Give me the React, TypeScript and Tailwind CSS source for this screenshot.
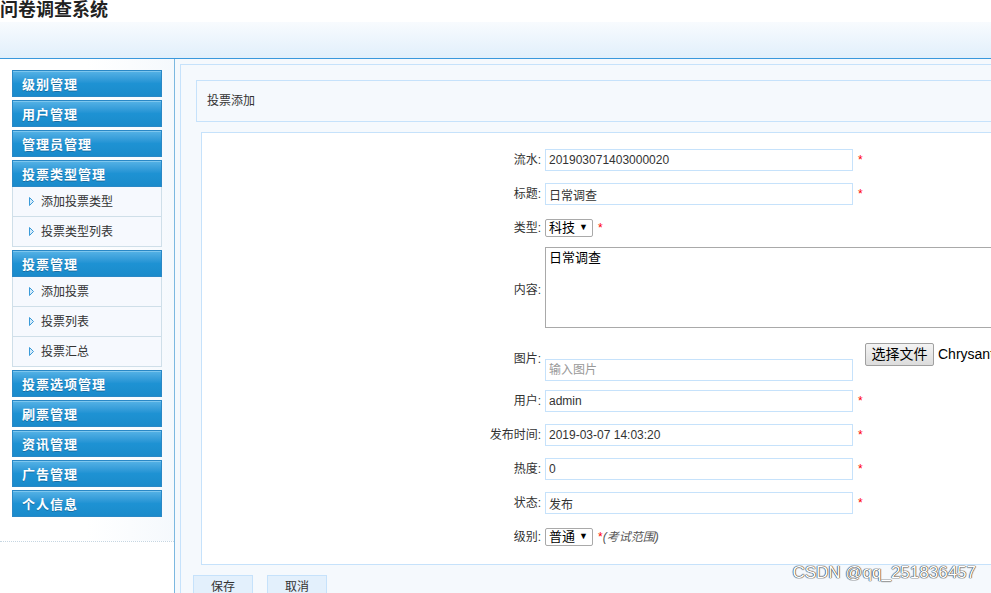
import React from 'react';

const font = "font-['Liberation_Sans','Noto_Sans_CJK_SC',sans-serif]";

type MenuItem = { title: string; subs?: string[] };

const menu: MenuItem[] = [
  { title: '级别管理' },
  { title: '用户管理' },
  { title: '管理员管理' },
  { title: '投票类型管理', subs: ['添加投票类型', '投票类型列表'] },
  { title: '投票管理', subs: ['添加投票', '投票列表', '投票汇总'] },
  { title: '投票选项管理' },
  { title: '刷票管理' },
  { title: '资讯管理' },
  { title: '广告管理' },
  { title: '个人信息' },
];

function Arrow() {
  return (
    <svg width="5" height="9" viewBox="0 0 5 9" className="shrink-0">
      <polygon points="0.5,0.5 4.5,4.5 0.5,8.5" fill="#d4ebfa" stroke="#3a9ad8" strokeWidth="1" />
    </svg>
  );
}

function Star() {
  return <span className="ml-[5px] text-[12px] leading-[14px] text-[#ff0000]">*</span>;
}

function Row({ label, children }: { label: string; children: React.ReactNode }) {
  return (
    <div className="flex items-center h-[34px]">
      <div className="w-[339px] shrink-0 text-right text-[12px] text-[#333]">{label}:</div>
      <div className="ml-[4px] flex items-center">{children}</div>
    </div>
  );
}

function TextBox({ value, placeholder }: { value?: string; placeholder?: string }) {
  return (
    <input
      readOnly
      defaultValue={value}
      placeholder={placeholder}
      className="w-[308px] h-[22px] border border-[#c6e2fb] bg-white px-[3px] text-[12px] text-[#333] outline-none placeholder:text-[#999]"
    />
  );
}

function FakeSelect({ value }: { value: string }) {
  return (
    <div className="w-[48px] h-[18px] border border-[#a9a9a9] rounded-[2px] bg-white flex items-center pl-[3px] pr-[4px] text-[13px] text-black">
      {value}
      <span className="ml-auto text-[9px]">▼</span>
    </div>
  );
}

export default function App() {
  return (
    <div className={`w-[991px] h-[593px] overflow-hidden bg-white relative ${font}`}>
      <div className="h-[22px] leading-[20px] text-[18px] font-bold text-[#222] whitespace-nowrap">问卷调查系统</div>
      <div className="h-[37px] border-b border-[#3a98dc] bg-gradient-to-b from-[#f8fbfe] to-[#e1effb]" />

      <div className="flex">
        {/* sidebar */}
        <aside className="w-[175px] shrink-0 border-r border-[#7cb8e0] bg-white min-h-[560px]">
          <div className="pt-[11px] px-[12px] pb-[21px] bg-gradient-to-r from-white via-white to-[#f5f9fd]">
            {menu.map((m) => (
              <div key={m.title} className="mb-[3px]">
                <div className="h-[27px] border border-[#2a88c6] bg-gradient-to-b from-[#55b2e6] via-[#1e92d3] to-[#1a8bcb] shadow-[inset_0_1px_0_#7cc6ee] flex items-center pl-[9px] pt-[3px] text-[13px] font-bold tracking-[1px] text-white [text-shadow:0_1px_0_#176da3]">
                  {m.title}
                </div>
                {m.subs &&
                  m.subs.map((s) => (
                    <div key={s} className="h-[30px] border-x border-b border-[#cfdfe9] bg-[#f6f9fe] flex items-center pl-[16px] gap-[7px] text-[12px] text-[#333]">
                      <Arrow />
                      {s}
                    </div>
                  ))}
              </div>
            ))}
          </div>
          <div className="border-t border-dotted border-[#c6d6e2]" />
        </aside>

        {/* content */}
        <main className="flex-1 bg-[#f5f9fd] pt-[5px] pl-[5px] min-h-[560px]">
          <div className="w-[1000px] border border-[#c6e2fb] pt-[15px] pl-[15px] pb-[20px]">
            <div className="h-[42px] border border-[#c6e2fb] bg-[#f5f9fd] flex items-center pl-[10px] text-[12px] text-[#333]">
              投票添加
            </div>

            <div className="mt-[10px] ml-[5px] border border-[#c6e2fb] bg-white pt-[10px] pb-[10px]">
              <Row label="流水">
                <TextBox value="201903071403000020" />
                <Star />
              </Row>
              <Row label="标题">
                <TextBox value="日常调查" />
                <Star />
              </Row>
              <Row label="类型">
                <FakeSelect value="科技" />
                <Star />
              </Row>
              <div className="flex items-center h-[89px]">
                <div className="w-[339px] shrink-0 text-right text-[12px] text-[#333]">内容:</div>
                <div className="ml-[4px] self-start mt-[2px] w-[480px] h-[81px] border border-[#a9a9a9] bg-white px-[3px] pt-[2px] text-[13px] leading-[16px] text-black">
                  日常调查
                </div>
              </div>
              <div className="flex items-center h-[50px]">
                <div className="w-[339px] shrink-0 text-right text-[12px] text-[#333]">图片:</div>
                <div className="ml-[4px] self-end mb-[3px]">
                  <TextBox placeholder="输入图片" />
                </div>
                <div className="self-start mt-[9px] ml-[12px] flex items-center whitespace-nowrap">
                  <div className="w-[69px] h-[23px] border border-[#a0a0a0] rounded-[2px] bg-gradient-to-b from-[#f4f4f4] to-[#dcdcdc] flex items-center justify-center text-[14px] text-black">
                    选择文件
                  </div>
                  <span className="ml-[4px] text-[14px] text-black">Chrysanthemum.jpg</span>
                </div>
              </div>
              <Row label="用户">
                <TextBox value="admin" />
                <Star />
              </Row>
              <Row label="发布时间">
                <TextBox value="2019-03-07 14:03:20" />
                <Star />
              </Row>
              <Row label="热度">
                <TextBox value="0" />
                <Star />
              </Row>
              <Row label="状态">
                <TextBox value="发布" />
                <Star />
              </Row>
              <Row label="级别">
                <FakeSelect value="普通" />
                <span className="ml-[5px] text-[12px] text-[#ff0000]">*</span>
                <span className="text-[12px] italic text-[#555]">(考试范围)</span>
              </Row>
            </div>

            <div className="mt-[10px] -ml-[3px] flex gap-[14px]">
              <div className="w-[60px] h-[24px] border border-[#c6e2fb] bg-[#e3f0fc] flex items-center justify-center text-[12px] text-[#333]">保存</div>
              <div className="w-[60px] h-[24px] border border-[#c6e2fb] bg-[#e3f0fc] flex items-center justify-center text-[12px] text-[#333]">取消</div>
            </div>
          </div>
        </main>
      </div>

      <div className="absolute right-[15px] bottom-[8px] text-[17px] text-white [text-shadow:0_0_1px_#333,0_0_1px_#333,0_0_1px_#333]">
        CSDN @qq_251836457
      </div>
    </div>
  );
}
